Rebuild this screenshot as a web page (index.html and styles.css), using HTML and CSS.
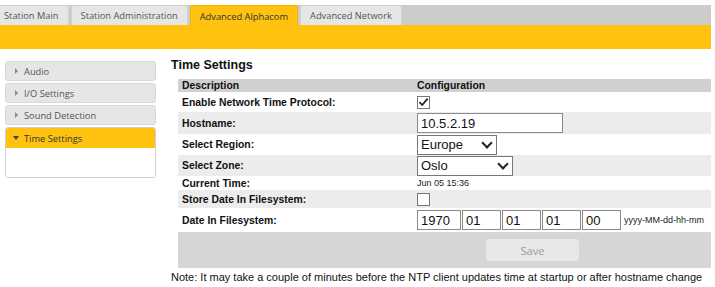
FILE: index.html
```html
<!DOCTYPE html>
<html lang="en">
  <head>
    <meta charset="UTF-8" />
    <title>Advanced Alphacom - Time Settings</title>
    <link rel="stylesheet" href="styles.css">
  </head>
  <body>
    <div class="topnav">
      <div class="tabs">
        <a class="tab tab-first">Station Main</a>
        <a class="tab">Station Administration</a>
        <a class="tab active-tab">Advanced Alphacom</a>
        <a class="tab">Advanced Network</a>
      </div>
    </div>
    <div class="subbar"></div>

    <div class="page">
      <div class="sidemenu">
        <div class="menu-item"><span class="arrow"></span>Audio</div>
        <div class="menu-item"><span class="arrow"></span>I/O Settings</div>
        <div class="menu-item"><span class="arrow"></span>Sound Detection</div>
        <div class="menu-open">
          <div class="menu-head"><span class="arrow-down"></span>Time Settings</div>
          <div class="menu-body"></div>
        </div>
      </div>

      <div class="content">
        <h2>Time Settings</h2>
        <table class="settings">
          <tr class="head">
            <td class="label">Description</td>
            <td>Configuration</td>
          </tr>
          <tr class="row-ntp">
            <td class="label">Enable Network Time Protocol:</td>
            <td><span class="check checked">
              <svg width="11" height="10" viewBox="0 0 11 10"><path d="M1.5 5.2 L4.2 8 L9.6 1.6" fill="none" stroke="#222" stroke-width="1.8"/></svg>
            </span></td>
          </tr>
          <tr class="alt row-host">
            <td class="label">Hostname:</td>
            <td><input class="field host" type="text" value="10.5.2.19"></td>
          </tr>
          <tr class="row-sel">
            <td class="label">Select Region:</td>
            <td><div class="select region">Europe<span class="chev"></span></div></td>
          </tr>
          <tr class="alt row-sel">
            <td class="label">Select Zone:</td>
            <td><div class="select zone">Oslo<span class="chev"></span></div></td>
          </tr>
          <tr class="row-time">
            <td class="label">Current Time:</td>
            <td class="small">Jun 05 15:36</td>
          </tr>
          <tr class="alt row-store">
            <td class="label">Store Date In Filesystem:</td>
            <td><span class="check"></span></td>
          </tr>
          <tr class="row-date">
            <td class="label">Date In Filesystem:</td>
            <td>
              <div class="date-fields">
                <input class="field year" type="text" value="1970">
                <input class="field part" type="text" value="01">
                <input class="field part" type="text" value="01">
                <input class="field part" type="text" value="01">
                <input class="field part" type="text" value="00">
                <span class="small hint">yyyy-MM-dd-hh-mm</span>
              </div>
            </td>
          </tr>
          <tr class="save-row">
            <td colspan="2"><button class="save-btn">Save</button></td>
          </tr>
        </table>
        <p class="note">Note: It may take a couple of minutes before the NTP client updates time at startup or after hostname change</p>
      </div>
    </div>
  </body>
</html>
```

FILE: styles.css
```css
body {
  margin: 0;
  font-family: "Liberation Sans", Arial, sans-serif;
  color: #000;
  background: #fff;
  overflow: hidden;
}

/* Top tabs */
.topnav {
  margin: 5px 4px 0 0;
  background: #cccccc;
  height: 20px;
  overflow: hidden;
}

.tabs {
  display: flex;
  gap: 2px;
  height: 20px;
  margin-left: -12px;
}

.tab {
  display: flex;
  align-items: center;
  height: 19px;
  padding: 0 9px;
  background: #e6e6e6;
  border: 1px solid #d2d2d2;
  border-bottom: none;
  border-radius: 3px 3px 0 0;
  font-family: "Open Sans", sans-serif;
  font-size: 9.3px;
  color: #555;
  white-space: nowrap;
}

.tab-first {
  padding-left: 15px;
}

.active-tab {
  background: #fec20f;
  border-color: #f0b400;
  color: #333;
  height: 20px;
}

.subbar {
  height: 24px;
  margin-right: 4px;
  background: #fec20f;
}

/* Page */
.page {
  display: flex;
  padding: 12px 0 0 5px;
}

.sidemenu {
  flex: none;
  width: 151px;
  display: flex;
  flex-direction: column;
  gap: 2px;
  font-family: "Open Sans", sans-serif;
  font-size: 9.3px;
  color: #555;
}

.menu-item {
  height: 18px;
  display: flex;
  align-items: center;
  padding-left: 9px;
  background: #e6e6e6;
  border: 1px solid #d8d8d8;
  border-radius: 3px;
}

.arrow {
  width: 0;
  height: 0;
  border-top: 3px solid transparent;
  border-bottom: 3px solid transparent;
  border-left: 3px solid #888;
  margin-right: 6px;
}

.menu-open {
  border: 1px solid #cfcfcf;
  border-radius: 3px;
  overflow: hidden;
}

.menu-head {
  height: 20px;
  display: flex;
  align-items: center;
  padding-left: 7px;
  background: #fec20f;
  color: #333;
}

.arrow-down {
  width: 0;
  height: 0;
  border-left: 3px solid transparent;
  border-right: 3px solid transparent;
  border-top: 4px solid #444;
  margin-right: 5px;
}

.menu-body {
  height: 29px;
  background: #fff;
}

/* Content */
.content {
  margin-left: 15px;
  flex: 1;
  min-width: 0;
  margin-right: 4px;
}

h2 {
  margin: -3px 0 7px 0;
  font-size: 12.5px;
  font-weight: bold;
  color: #111;
}

.settings {
  margin-left: 7px;
  width: calc(100% - 7px);
  border-collapse: collapse;
  font-size: 10.4px;
}

.settings td {
  padding: 0 0 0 4px;
  vertical-align: middle;
}

.settings td.label {
  width: 231px;
  font-weight: bold;
  color: #111;
}

.settings .head td {
  height: 13px;
  background: #d0d0d0;
  font-weight: bold;
  color: #111;
}

.settings .alt td {
  background: #ececec;
}

.row-ntp td { height: 20px; }
.row-host td { height: 22px; }
.row-sel td { height: 21px; }
.row-time td { height: 14px; }
.row-store td { height: 18px; }
.row-date td { height: 24px; }

.small {
  font-size: 9px;
  color: #222;
}

.check {
  display: inline-flex;
  align-items: center;
  justify-content: center;
  width: 11px;
  height: 11px;
  border: 1px solid #777;
  background: #fff;
  vertical-align: middle;
}

.field {
  font-family: "Liberation Sans", Arial, sans-serif;
  font-size: 13px;
  color: #111;
  border: 1px solid #8a8a8a;
  padding: 0 3px;
  height: 20px;
  box-sizing: border-box;
  margin: 0;
}

.host {
  width: 146px;
}

.select {
  display: inline-flex;
  align-items: center;
  justify-content: space-between;
  box-sizing: border-box;
  height: 20px;
  padding: 0 5px 0 3px;
  border: 1px solid #777;
  background: #fff;
  font-size: 13px;
  color: #111;
}

.region { width: 80px; }
.zone { width: 96px; }

.chev {
  width: 6px;
  height: 6px;
  border-right: 2px solid #222;
  border-bottom: 2px solid #222;
  transform: translateY(-2px) rotate(45deg);
}

.date-fields {
  display: flex;
  align-items: center;
  gap: 1px;
}

.year { width: 44px; }
.part { width: 39px; }

.hint {
  margin-left: 2px;
}

.save-row td {
  height: 36px;
  background: #d6d6d6;
  padding-left: 308px;
}

.save-btn {
  display: block;
  width: 93px;
  height: 22px;
  border: none;
  border-radius: 3px;
  background: #e8e8e8;
  color: #999;
  font-family: "Open Sans", sans-serif;
  font-size: 11px;
}

.note {
  margin: 3px 0 0 0;
  font-size: 11px;
  color: #111;
  white-space: nowrap;
}
```
